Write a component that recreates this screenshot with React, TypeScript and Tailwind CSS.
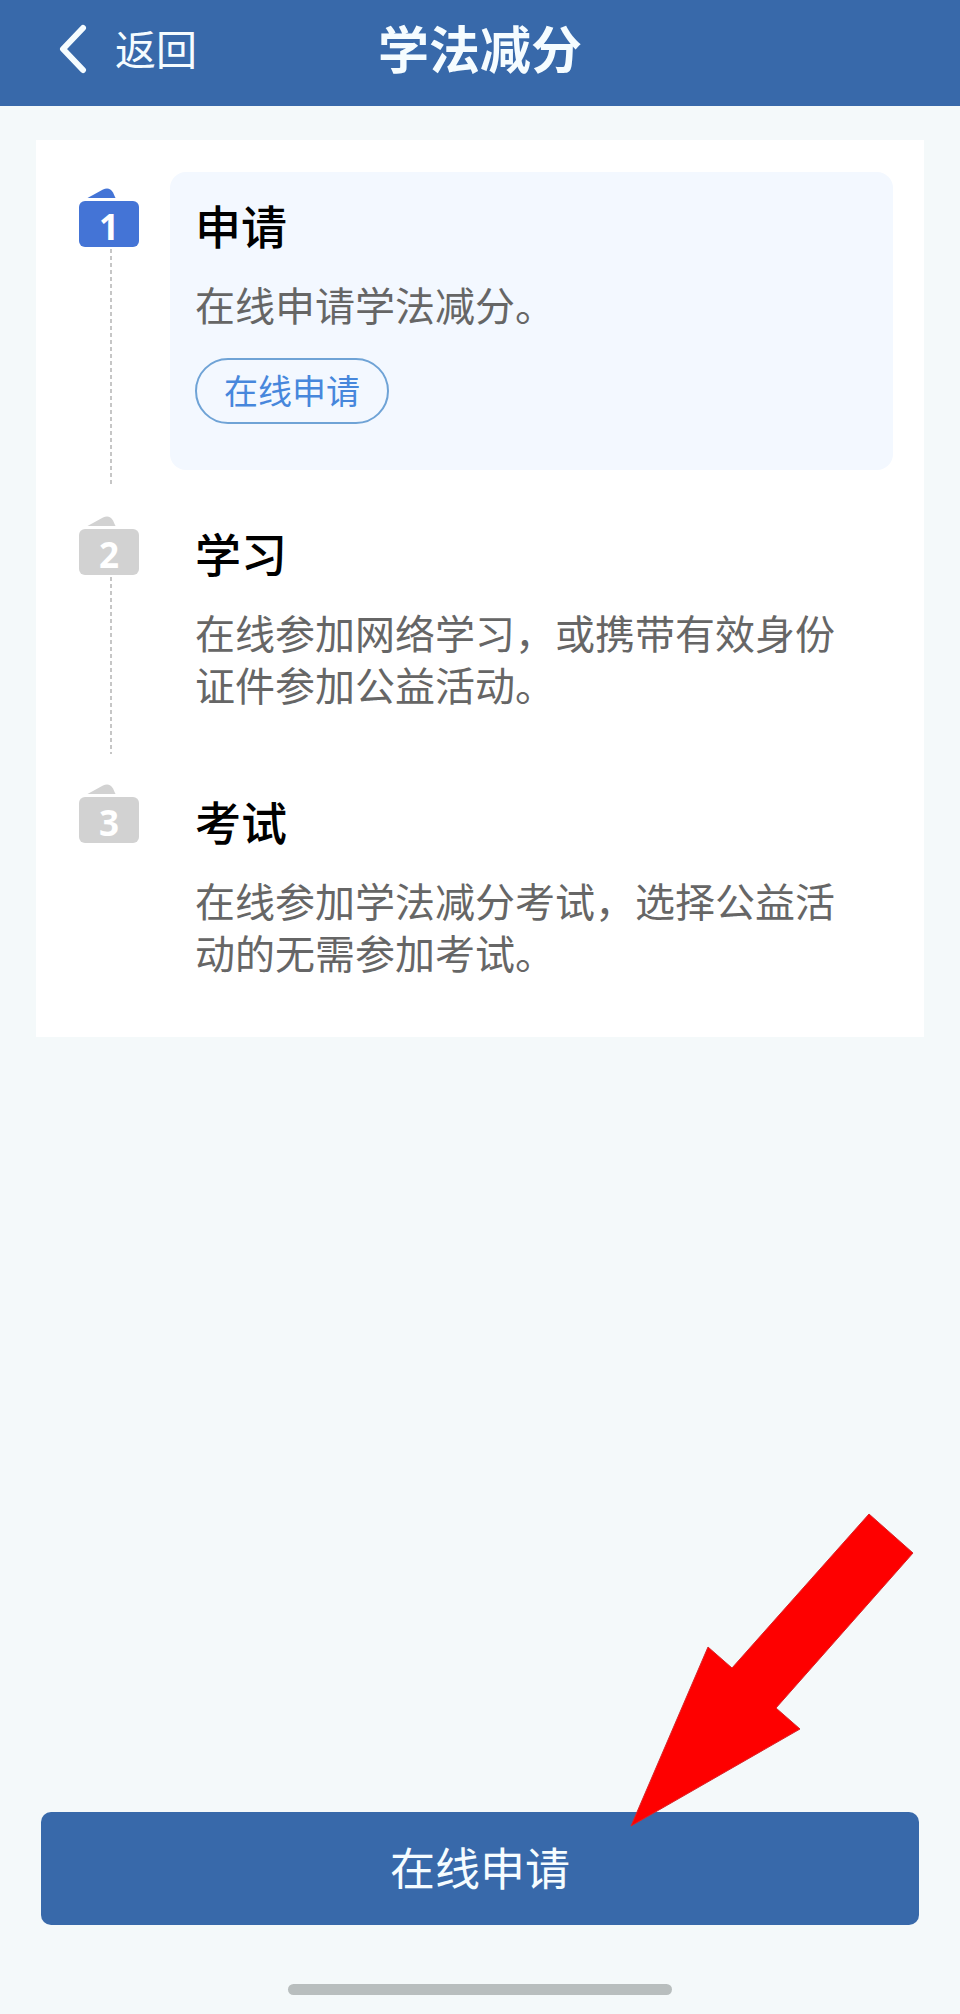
import { clsx } from 'clsx';

interface Step {
  title: string;
  description: string;
  action?: string;
}

const steps: Step[] = [
  { title: '申请', description: '在线申请学法减分。', action: '在线申请' },
  { title: '学习', description: '在线参加网络学习，或携带有效身份证件参加公益活动。' },
  { title: '考试', description: '在线参加学法减分考试，选择公益活动的无需参加考试。' },
];

const currentStep = 0;

function StepBadge({ number, active }: { number: number; active: boolean }) {
  return (
    <div className="relative w-16 shrink-0">
      <svg
        viewBox="0 0 64 59"
        className={clsx('h-[59px] w-16', active ? 'text-[#4474d6]' : 'text-[#d2d2d2]')}
        aria-hidden="true"
      >
        <path d="M8.500 10 L24 1.500 Q30.500 -1.500 34 4.500 L36.500 10 Z" fill="currentColor" />
        <rect x="0" y="13" width="60" height="46" rx="6" fill="currentColor" />
      </svg>
      <span className="absolute bottom-0 left-0 w-[60px] text-center font-['Open_Sans',sans-serif] text-[35px] leading-10 font-bold text-white">
        {number}
      </span>
    </div>
  );
}

function StepItem({ step, index, last }: { step: Step; index: number; last: boolean }) {
  const active = index === currentStep;

  return (
    <li className="flex">
      {/* Badge and dashed connector */}
      <div className="mr-[27px] flex w-16 shrink-0 flex-col items-center pt-4 pb-[14px]">
        <StepBadge number={index + 1} active={active} />
        {!last && (
          <div className="mt-0.5 w-0.5 flex-1 bg-[repeating-linear-gradient(to_bottom,#c6c6c6_0_4px,transparent_4px_7px)]" />
        )}
      </div>

      {/* Content */}
      <div className={clsx('min-w-0 flex-1', !last && 'pb-[30px]')}>
        <div className={clsx('rounded-2xl px-[25px] pt-6 pb-7', active && 'bg-[#f3f8ff]')}>
          <h2 className="text-[46px] leading-[56px] font-medium text-black">{step.title}</h2>
          <p className="mt-[26px] text-[40px] leading-[52px] text-[#666]">{step.description}</p>
          {step.action && (
            <button
              type="button"
              className="mt-7 mb-[18px] flex h-[66px] items-center rounded-full border-2 border-[#6fa3d6] px-[27px] pb-0.5 text-[34px] leading-none text-[#4787dc]"
            >
              {step.action}
            </button>
          )}
        </div>
      </div>
    </li>
  );
}

export default function App() {
  return (
    <div className="flex min-h-screen flex-col bg-[#f4f9fa] font-['Noto_Sans_CJK_SC',sans-serif]">
      <header className="grid h-[106px] grid-cols-[1fr_auto_1fr] items-center bg-[#3869aa] pb-2 text-[#f5fcff]">
        <a href="#" className="ml-[57px] flex items-center gap-7 text-[41px] leading-none">
          <svg
            viewBox="0 0 30 50"
            className="h-[50px] w-[30px]"
            fill="none"
            stroke="currentColor"
            strokeWidth="6"
            strokeLinecap="round"
            strokeLinejoin="round"
          >
            <path d="M26 4 L6 25 L26 46" />
          </svg>
          <span className="pb-1">返回</span>
        </a>
        <h1 className="pb-1 text-[51px] leading-none font-bold">学法减分</h1>
      </header>

      <main className="mx-9 mt-[34px] bg-white pt-8 pr-[31px] pb-[31px] pl-[43px]">
        <ol>
          {steps.map((step, index) => (
            <StepItem
              key={step.title}
              step={step}
              index={index}
              last={index === steps.length - 1}
            />
          ))}
        </ol>
      </main>

      <footer className="mt-auto flex flex-col items-center px-[41px] pb-[19px]">
        <div className="relative w-full">
          <button
            type="button"
            className="h-[113px] w-full rounded-[10px] bg-[#3869aa] pb-1 text-[45px] leading-none text-[#f5fcff]"
          >
            在线申请
          </button>
          {/* Red pointer over the button */}
          <svg
            viewBox="0 0 284 314"
            className="pointer-events-none absolute right-[5px] bottom-[98px] h-[314px] w-[284px]"
            aria-hidden="true"
          >
            <path
              d="M239 1 L283 40 L146 195 L170 216 L1 313 L78 134 L102 155 Z"
              fill="#fe0000"
              stroke="#d8262a"
              strokeWidth="1"
            />
          </svg>
        </div>
        {/* Home indicator */}
        <div className="mt-[59px] h-[11px] w-96 rounded-full bg-[#b8bebe]" />
      </footer>
    </div>
  );
}
